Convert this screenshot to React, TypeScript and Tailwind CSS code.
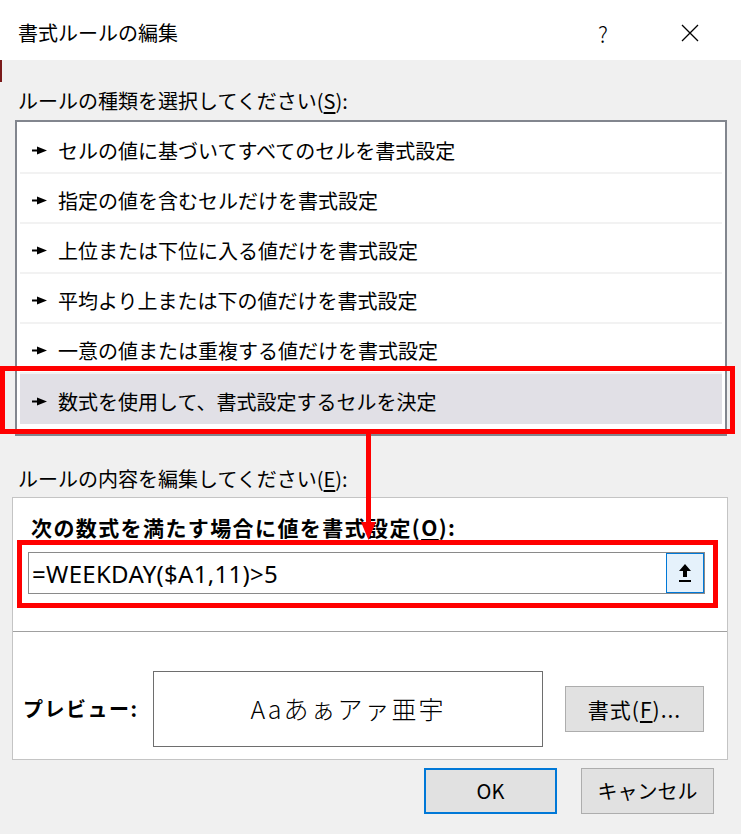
import React from 'react';

const rules = [
  'セルの値に基づいてすべてのセルを書式設定',
  '指定の値を含むセルだけを書式設定',
  '上位または下位に入る値だけを書式設定',
  '平均より上または下の値だけを書式設定',
  '一意の値または重複する値だけを書式設定',
  '数式を使用して、書式設定するセルを決定',
];

function Pointer() {
  return (
    <svg width="16" height="9" viewBox="0 0 16 9" className="shrink-0">
      <rect x="0" y="3.5" width="7" height="2" fill="#000" />
      <path d="M5 0.5 L15 4.5 L5 8.5 Z" fill="#000" />
    </svg>
  );
}

export default function App() {
  return (
    <div className="relative w-[741px] h-[834px] bg-[#f0f0f0] overflow-hidden text-black text-[20px] font-['Noto_Sans_CJK_JP','Noto_Sans',sans-serif]">
      {/* Title bar */}
      <div className="h-[60px] bg-white flex items-center pl-[18px] pr-[31px] pt-[6px]">
        <span className="leading-none">書式ルールの編集</span>
        <div className="flex-1" />
        <span className="w-[40px] text-center text-[22px] font-light leading-none">?</span>
        <div className="w-[47px]" />
        <div className="w-[40px] flex justify-center">
          <svg width="18" height="18" viewBox="0 0 18 18">
            <path d="M1 1 L17 17 M17 1 L1 17" stroke="#000" strokeWidth="1.3" />
          </svg>
        </div>
      </div>
      <div className="absolute left-0 top-[60px] w-[2px] h-[22px] bg-[#7a1a1a]" />

      {/* Rule type */}
      <div className="pt-[26px] pl-[18px] leading-[30px]">
        ルールの種類を選択してください(<span className="underline underline-offset-[3px]">S</span>):
      </div>
      <div className="mt-[4px] ml-[15px] w-[712px] h-[316px] border-2 border-[#82868e] bg-white px-[3px] pt-[2px]">
        {rules.map((r, i) => (
          <div
            key={r}
            className={
              i === rules.length - 1
                ? 'h-[50px] flex items-center gap-[10px] pl-[12px] pt-[5px] bg-[#e1e0e6]'
                : 'h-[50px] flex items-center gap-[10px] pl-[12px] pt-[5px] border-b-2 border-[#f2f2f2]'
            }
          >
            <Pointer />
            <span className="leading-none">{r}</span>
          </div>
        ))}
      </div>

      {/* Edit rule */}
      <div className="mt-[28px] pl-[18px] leading-[30px]">
        ルールの内容を編集してください(<span className="underline underline-offset-[3px]">E</span>):
      </div>
      <div className="mt-[3px] ml-[12px] w-[716px] h-[263px] border border-[#c4c4c4] bg-white">
        <div className="pt-[14px] pl-[18px] leading-[30px] font-bold text-[21px] tracking-[1.4px]">
          次の数式を満たす場合に値を書式設定(<span className="underline underline-offset-[3px]">O</span>):
        </div>
        <div className="relative mt-[10px] ml-[15px] w-[677px] h-[42px] border border-[#8a8a8a] flex items-center">
          <span className="flex-1 pl-[3px] pt-[2px] text-[24px] tracking-[0.3px] leading-none font-['Noto_Sans','Noto_Sans_CJK_JP',sans-serif]">=WEEKDAY($A1,11)&gt;5</span>
          <div className="w-[38px] h-[40px] border border-[#0078d7] bg-[#e5f1fb] flex items-center justify-center">
            <svg width="14" height="20" viewBox="0 0 14 20">
              <path d="M7 1 L13 8 L9 8 L9 14 L5 14 L5 8 L1 8 Z" fill="#000" />
              <rect x="1" y="17" width="12" height="2" fill="#000" />
            </svg>
          </div>
          <div className="absolute -left-[12px] -right-[14px] -top-[13px] -bottom-[15px] border-[5px] border-[#ff0000]" />
        </div>
        <div className="mt-[37px] h-[2px] bg-[#a0a0a0] border-b border-white" />
        <div className="mt-[38px] flex items-center pl-[10px]">
          <span className="w-[130px] font-bold leading-none tracking-[1.5px]">プレビュー:</span>
          <div className="w-[390px] h-[76px] border border-[#6e6e6e] flex items-center justify-center text-[25px] tracking-[2px] font-light">
            Aaあぁアァ亜宇
          </div>
          <button className="ml-[22px] w-[139px] h-[46px] bg-[#e1e1e1] border border-[#adadad] leading-none text-[21px] tracking-[1px]">
            書式(<span className="underline underline-offset-[3px]">F</span>)...
          </button>
        </div>
      </div>

      {/* Buttons */}
      <div className="mt-[8px] flex justify-end gap-[24px] pr-[27px]">
        <button className="w-[133px] h-[46px] bg-[#e1e1e1] border-2 border-[#0078d7] leading-none">OK</button>
        <button className="w-[133px] h-[46px] bg-[#e1e1e1] border border-[#adadad] leading-none">キャンセル</button>
      </div>

      {/* Annotations */}
      <div className="absolute left-0 top-[366px] w-[735px] h-[68px] border-[5px] border-[#ff0000]" />
      <div className="absolute left-[366px] top-[434px] w-[5px] h-[92px] bg-[#ff0000]" />
      <svg className="absolute left-[361px] top-[522px]" width="15" height="18" viewBox="0 0 15 18">
        <path d="M0 0 L15 0 L7.5 18 Z" fill="#ff0000" />
      </svg>
    </div>
  );
}
